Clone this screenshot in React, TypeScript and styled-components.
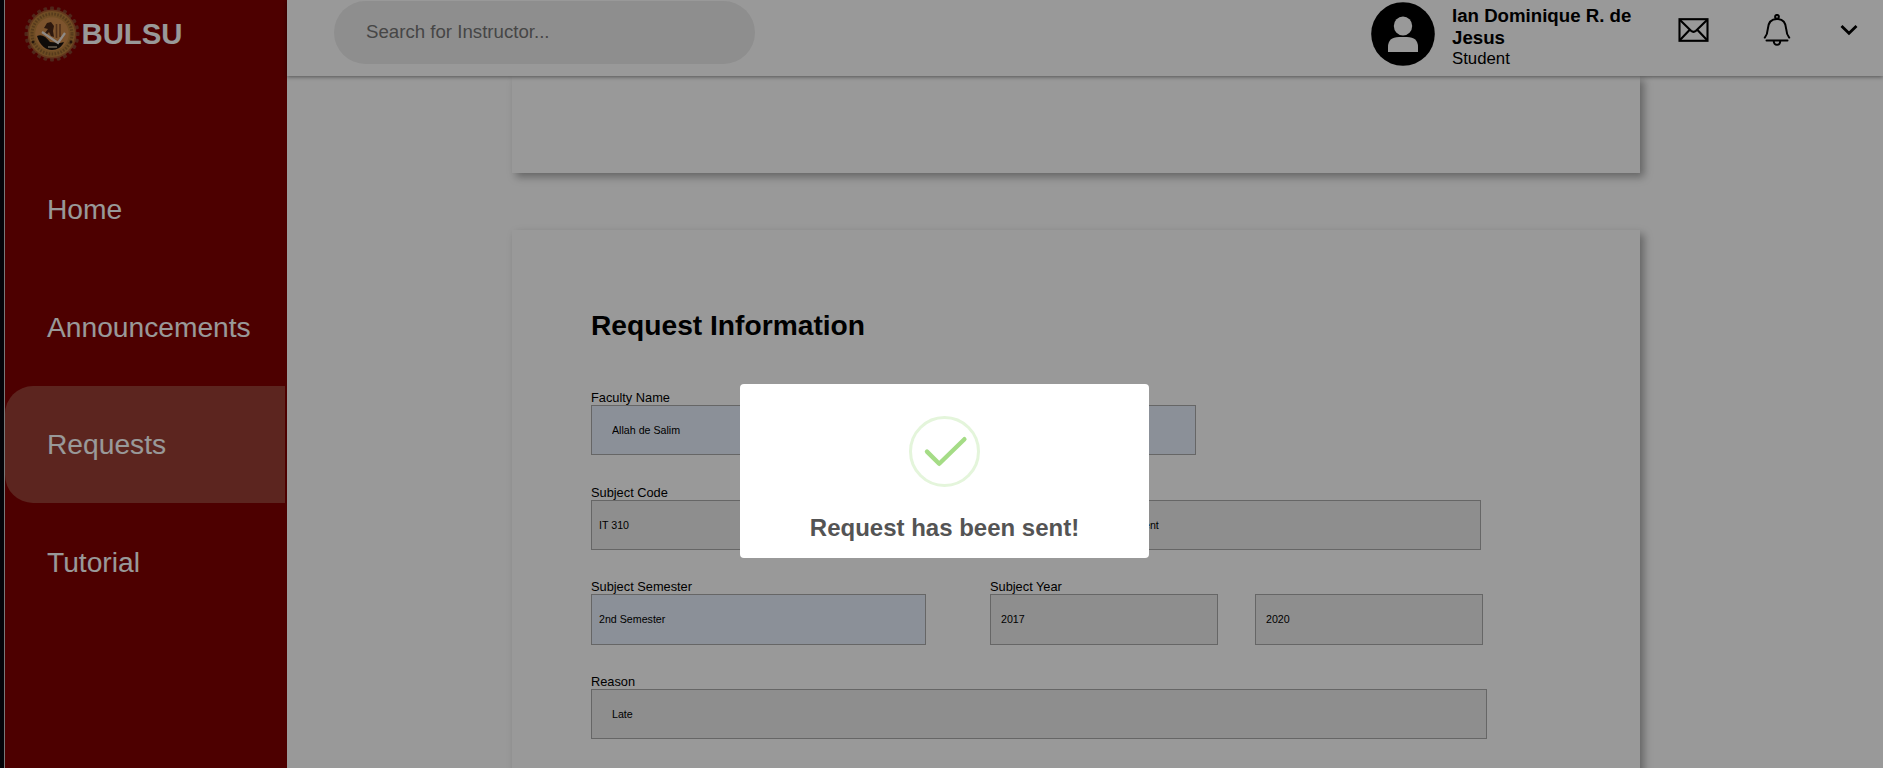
import React from "react";
import styled, { createGlobalStyle } from "styled-components";

const GlobalStyle = createGlobalStyle`
  * { box-sizing: border-box; }
  html, body { margin: 0; padding: 0; height: 768px; overflow: hidden; background: #fff; }
  body { font-family: "Liberation Sans", Arial, sans-serif; color: #000; }
`;

const Page = styled.div`
  position: relative;
  display: flex;
  width: 1883px;
  height: 768px;
  overflow: hidden;
  background: #fff;
`;

const WindowEdge = styled.div`
  flex: none;
  width: 5px;
  background: #08080f;
  border-right: 1px solid #c8c8c8;
`;

const Sidebar = styled.aside`
  flex: none;
  width: 282px;
  background: #800000;
  color: #fff;
`;

const Brand = styled.div`
  display: flex;
  align-items: center;
  gap: 1.5px;
  height: 67px;
  padding-left: 19px;
  font-size: 29.33px;
  font-weight: 700;
  svg { flex: none; display: block; }
`;

const Nav = styled.nav`
  display: flex;
  flex-direction: column;
  padding: 83.4px 2px 0 0;
`;

const NavItem = styled.a<{ $active?: boolean }>`
  display: flex;
  align-items: center;
  height: 117.6px;
  padding: 1px 0 0 42px;
  font-size: 28.2px;
  border-radius: 28px 0 0 28px;
  background: ${(p) => (p.$active ? "#9a3e34" : "transparent")};
`;

const Main = styled.div`
  flex: 1;
  min-width: 0;
  display: flex;
  flex-direction: column;
`;

const Header = styled.header`
  position: relative;
  z-index: 1;
  flex: none;
  display: flex;
  align-items: flex-start;
  height: 76px;
  padding-left: 47px;
  background: #fff;
  box-shadow: 0 1px 4px rgba(0, 0, 0, 0.45);
`;

const Search = styled.input`
  width: 421px;
  height: 63px;
  margin-top: 1px;
  padding: 0 32px 2px;
  border: 0;
  border-radius: 32px;
  background: #ededed;
  font: 18.67px "Liberation Sans", Arial, sans-serif;
  &::placeholder { color: #757575; opacity: 1; }
`;

const Avatar = styled.svg`
  flex: none;
  margin: 2px 17px 0 616px;
`;

const User = styled.div`
  width: 226px;
  padding: 5px 30px 0 0;
  font-size: 16.8px;
  line-height: 21px;
`;

const UserName = styled.div`
  font-size: 18.67px;
  font-weight: 700;
  line-height: 21.5px;
`;

const HeaderIcons = styled.div`
  display: flex;
  align-items: center;
  height: 60px;
  svg { display: block; flex: none; }
  svg + svg { margin-left: 54px; }
  svg + svg + svg { margin-left: 49px; }
`;

const Content = styled.main`
  flex: 1;
  display: flex;
  flex-direction: column;
  gap: 57px;
  padding-left: 225px;
`;

const Card = styled.section<{ $h: number }>`
  flex: none;
  width: 1128px;
  height: ${(p) => p.$h}px;
  padding: 78px 0 0 79px;
  background: #fff;
  box-shadow: 4px 4px 8px rgba(0, 0, 0, 0.34);
`;

const Title = styled.h2`
  height: 81px;
  margin: 0;
  font-size: 28.2px;
  line-height: 34px;
`;

const Row = styled.div`
  display: flex;
  align-items: flex-start;
  height: 94.67px;
`;

const Field = styled.label<{ $w: number; $gap?: number; $bare?: boolean }>`
  flex: none;
  display: block;
  width: ${(p) => p.$w}px;
  margin-left: ${(p) => p.$gap ?? 0}px;
  padding-top: ${(p) => (p.$bare ? 16 : 2)}px;
  font-size: 12.8px;
  line-height: 14px;
`;

const Input = styled.input<{ $pad: number; $filled?: boolean }>`
  display: block;
  width: 100%;
  height: 50.3px;
  padding: 0 0 0 ${(p) => p.$pad}px;
  border: 1px solid #aaa;
  border-radius: 0;
  background: ${(p) => (p.$filled ? "#e8f0fe" : "#ededed")};
  color: #000;
  font: 10.67px "Liberation Sans", Arial, sans-serif;
`;

const Overlay = styled.div`
  position: absolute;
  inset: 0;
  z-index: 10;
  display: flex;
  justify-content: center;
  align-items: flex-start;
  padding: 384px 0 0 6px;
  background: rgba(0, 0, 0, 0.4);
`;

const Modal = styled.div`
  display: flex;
  flex-direction: column;
  align-items: center;
  width: 409px;
  height: 174px;
  padding-top: 32px;
  border-radius: 4px;
  background: #fff;
  svg { display: block; }
`;

const ModalTitle = styled.h3`
  margin: 27px 0 0;
  font-size: 24px;
  line-height: 28px;
  color: #545454;
`;

const teeth = Array.from({ length: 24 }, (_, i) => i * 15);

const Seal = () => (
  <svg width="56" height="56" viewBox="-28 -28 56 56">
    {teeth.map((a) => (
      <rect key={a} x="-1.9" y="-27.5" width="3.8" height="6" rx="1" fill="#84402c" transform={`rotate(${a})`} />
    ))}
    <circle r="24.5" fill="#a35a30" />
    <circle r="23" fill="#b9803c" />
    <circle r="20" fill="none" stroke="#6d4a26" strokeWidth="3" strokeDasharray="1.6 1.4" opacity=".55" />
    <circle r="16.8" fill="#d08c4c" />
    <path d="M-15 2C-10 0-6 3-2 8L8 9 12 8C10 13 5 16 0 16-6 16-12 12-15 2Z" fill="#191310" />
    <path d="M-8-6L-5-11-1-12 2-8 1-3 2 3-1 2-3-2-6 1-7-1-4-5Z" fill="#4a2716" />
    <path d="M4.5-10V4M8-10V3" stroke="#85502c" strokeWidth="1.6" />
    <path d="M-10-2L6 9 13-1" fill="none" stroke="#efe6df" strokeWidth="2.2" />
    <path d="M-4 13H5" stroke="#b9a890" strokeWidth="1.4" />
    <circle cx="-19" cy="8" r="1.5" fill="#3c2414" />
    <circle cx="19" cy="8" r="1.5" fill="#3c2414" />
  </svg>
);

export default function App() {
  return (
    <>
      <GlobalStyle />
      <Page>
        <WindowEdge />
        <Sidebar>
          <Brand>
            <Seal />
            BULSU
          </Brand>
          <Nav>
            <NavItem>Home</NavItem>
            <NavItem>Announcements</NavItem>
            <NavItem $active>Requests</NavItem>
            <NavItem>Tutorial</NavItem>
          </Nav>
        </Sidebar>
        <Main>
          <Header>
            <Search placeholder="Search for Instructor..." />
            <Avatar width="64" height="64" viewBox="0 0 64 64">
              <circle cx="32" cy="32" r="31.8" fill="#000" />
              <ellipse cx="32" cy="24" rx="9.2" ry="9.4" fill="#fff" />
              <path d="M17 50V45Q17 35 28 35H36Q47 35 47 45V50Z" fill="#fff" />
            </Avatar>
            <User>
              <UserName>Ian Dominique R. de Jesus</UserName>
              Student
            </User>
            <HeaderIcons>
              <svg width="31" height="24" viewBox="0 0 31 24" fill="none" stroke="#000" strokeWidth="2.1">
                <rect x="1.5" y="1.2" width="28" height="21.6" />
                <path d="M2 2L13 12.8Q15.5 15 18 12.8L29 2M2 22L11.5 12M29 22L19.5 12" />
              </svg>
              <svg width="28" height="32" viewBox="0 0 28 32" fill="none" stroke="#000" strokeWidth="2" strokeLinecap="round">
                <circle cx="14" cy="2.8" r="1.9" />
                <path d="M1.8 23.6C4 21 4.5 19.5 4.8 15 5.2 8 8.5 4.9 14 4.9S22.8 8 23.2 15C23.5 19.5 24 21 26.2 23.6M3.5 26.4H24.5M10.7 27Q11 30.8 14 30.8T17.3 27" />
              </svg>
              <svg width="18" height="12" viewBox="0 0 18 12" fill="none" stroke="#000" strokeWidth="2.8">
                <path d="M1.5 2L9 9.3 16.5 2" />
              </svg>
            </HeaderIcons>
          </Header>
          <Content>
            <Card $h={97} />
            <Card $h={620}>
              <Title>Request Information</Title>
              <Row>
                <Field $w={605}>
                  Faculty Name
                  <Input $pad={20} $filled defaultValue="Allah de Salim" />
                </Field>
              </Row>
              <Row>
                <Field $w={335}>
                  Subject Code
                  <Input $pad={7} defaultValue="IT 310" />
                </Field>
                <Field $w={491} $gap={64}>
                  Subject Description
                  <Input $pad={12.6} defaultValue="Database Systems Development" />
                </Field>
              </Row>
              <Row>
                <Field $w={335}>
                  Subject Semester
                  <Input $pad={7} $filled defaultValue="2nd Semester" />
                </Field>
                <Field $w={228} $gap={64}>
                  Subject Year
                  <Input $pad={10} defaultValue="2017" />
                </Field>
                <Field $w={228} $gap={37} $bare>
                  <Input $pad={10} defaultValue="2020" />
                </Field>
              </Row>
              <Row>
                <Field $w={896}>
                  Reason
                  <Input $pad={20} defaultValue="Late" />
                </Field>
              </Row>
            </Card>
          </Content>
        </Main>
        <Overlay>
          <Modal>
            <svg width="71" height="71" viewBox="0 0 71 71" fill="none">
              <circle cx="35.5" cy="35.5" r="34" stroke="#e4f5db" strokeWidth="3" />
              <path d="M18 35.6L30.2 47.8 55.4 23.2" stroke="#a5dc86" strokeWidth="4.4" strokeLinecap="round" strokeLinejoin="round" />
            </svg>
            <ModalTitle>Request has been sent!</ModalTitle>
          </Modal>
        </Overlay>
      </Page>
    </>
  );
}
